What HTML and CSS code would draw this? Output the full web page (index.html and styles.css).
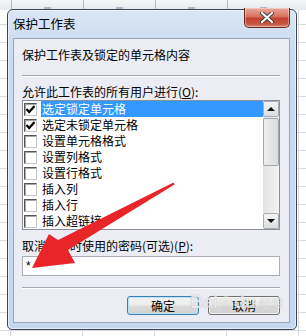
FILE: index.html
```html
<!DOCTYPE html>
<html lang="zh-CN">
<head>
<meta charset="utf-8">
<title>保护工作表</title>
<link rel="stylesheet" href="styles.css">
</head>
<body>
<div class="colhead">
  <div class="corner"></div>
  <div class="col"><span class="letter"></span></div>
  <div class="col"><span class="letter"></span></div>
  <div class="col"><span class="letter"></span></div>
  <div class="col"><span class="letter"></span></div>
</div>

<div class="window">
  <div class="titlebar">
    <span class="title">保护工作表</span>
    <div class="close">
      <svg width="14" height="11" viewBox="0 0 14 11"><path d="M2 1 L12 10 M12 1 L2 10" stroke="#3a3a3a" stroke-width="4" stroke-linecap="round"/><path d="M2 1 L12 10 M12 1 L2 10" stroke="#fff" stroke-width="2.2" stroke-linecap="round"/></svg>
    </div>
  </div>
  <div class="client">
    <div class="intro">保护工作表及锁定的单元格内容</div>
    <div class="sep"></div>
    <div class="label">允许此工作表的所有用户进行(<u>O</u>):</div>
    <div class="list">
      <div class="items">
        <div class="item sel"><span class="cb"><svg width="11" height="11" viewBox="0 0 11 11"><path d="M1.5 5 L4.2 8 L9.5 2" fill="none" stroke="#000" stroke-width="2.2"/></svg></span><span class="txt">选定锁定单元格</span></div>
        <div class="item"><span class="cb"><svg width="11" height="11" viewBox="0 0 11 11"><path d="M1.5 5 L4.2 8 L9.5 2" fill="none" stroke="#000" stroke-width="2.2"/></svg></span><span class="txt">选定未锁定单元格</span></div>
        <div class="item"><span class="cb"></span><span class="txt">设置单元格格式</span></div>
        <div class="item"><span class="cb"></span><span class="txt">设置列格式</span></div>
        <div class="item"><span class="cb"></span><span class="txt">设置行格式</span></div>
        <div class="item"><span class="cb"></span><span class="txt">插入列</span></div>
        <div class="item"><span class="cb"></span><span class="txt">插入行</span></div>
        <div class="item"><span class="cb"></span><span class="txt">插入超链接</span></div>
      </div>
      <div class="scroll">
        <div class="sbtn"><span class="tri up"></span></div>
        <div class="track"><div class="thumb"></div></div>
        <div class="sbtn"><span class="tri down"></span></div>
      </div>
    </div>
    <div class="label l2">取消保护时使用的密码(可选)(<u>P</u>):</div>
    <div class="input">*</div>
    <div class="sep sep2"></div>
    <div class="buttons">
      <div class="btn default">确定</div>
      <div class="btn">取消</div>
    </div>
  </div>
</div>

<svg class="arrow" width="306" height="336" viewBox="0 0 306 336">
  <polygon points="173.5,182.5 58,240 49,234 32,268 75,263 68,250 174.5,184.5" fill="#e8262a"/>
</svg>

<div class="watermark">
  <span class="wm-bai">Bai</span><span class="wm-paw">❀</span><span class="wm-du">du</span><span class="wm-jy">经验</span>
</div>
</body>
</html>
```

FILE: styles.css
```css
* { box-sizing: border-box; margin: 0; padding: 0; }

html, body { width: 306px; height: 336px; overflow: hidden; }

body {
  position: relative;
  font-family: "Noto Sans CJK SC", "Microsoft YaHei", sans-serif;
  font-size: 12px;
  color: #000;
  background-color: #fff;
  background-image:
    linear-gradient(to right, #d8dadd 1px, transparent 1px),
    linear-gradient(to bottom, #d8dadd 1px, transparent 1px);
  background-size: 72px 100%, 100% 18px;
  background-position: 10px 0, 0 24px;
}

/* spreadsheet column header behind the dialog */
.colhead {
  display: flex;
  height: 10px;
  overflow: hidden;
  background: linear-gradient(#f5f6f8, #e4e7ec);
}
.corner { width: 11px; }
.col {
  width: 72px;
  height: 10px;
  border-left: 1px solid #b4bac4;
  display: flex;
  justify-content: center;
  align-items: flex-end;
}
.letter {
  width: 7px;
  height: 3px;
  background: #8a94a3;
  opacity: 0.6;
}

/* dialog window */
.window {
  position: absolute;
  left: 7px;
  top: 9px;
  width: 290px;
  height: 321px;
  border: 1px solid #3b4556;
  border-radius: 6px 6px 5px 5px;
  background: linear-gradient(to bottom, #dbe6f4 0, #c9dbf0 40px, #c3d7ef 100%);
  box-shadow: inset 0 0 0 1px rgba(255,255,255,0.55);
  display: flex;
  flex-direction: column;
  padding: 0 6px 6px 5px;
}

.titlebar {
  height: 28px;
  display: flex;
  align-items: flex-start;
}
.title {
  padding-top: 6px;
  line-height: 16px;
  font-size: 12.5px;
  color: #000;
}
.close {
  margin-left: auto;
  margin-top: -2px;
  width: 46px;
  height: 20px;
  border: 1px solid #6b2a22;
  border-top: none;
  border-radius: 0 0 5px 5px;
  background: linear-gradient(to bottom, #eaa99c 0%, #d7715f 45%, #c2412c 55%, #c85a45 85%, #d98a76 100%);
  display: flex;
  align-items: center;
  justify-content: center;
  box-shadow: inset 0 0 0 1px rgba(255,255,255,0.35);
}

.client {
  flex: 1;
  background: #ebecf4;
  border: 1px solid #96a5b9;
  padding: 8px 8px 0 8px;
}

.intro {
  line-height: 15px;
  height: 15px;
}

.sep {
  margin-top: 13px;
  height: 2px;
  border-top: 1px solid #a3a6b0;
  border-bottom: 1px solid #fff;
  margin-right: 1px;
}

.label {
  margin-top: 8px;
  line-height: 14px;
  height: 14px;
}
.label u { text-decoration: underline; text-underline-offset: 1px; }

.list {
  margin-top: 1px;
  margin-right: 1px;
  height: 130px;
  background: #fff;
  border: 1px solid #8a8f99;
  display: flex;
}
.items { flex: 1; }
.item {
  height: 16px;
  display: flex;
  align-items: center;
}
.cb {
  width: 13px;
  height: 13px;
  margin-left: 1px;
  margin-right: 4px;
  background: #fff;
  border-style: solid;
  border-width: 1px;
  border-color: #555 #c6c6c6 #c6c6c6 #555;
  box-shadow: inset 1px 1px 0 #a8a8a8;
  display: flex;
  align-items: center;
  justify-content: center;
}
.txt {
  flex: 1;
  height: 16px;
  line-height: 16px;
  padding-left: 1px;
}
.sel .txt { background: #3399ff; color: #fff; }

.scroll {
  width: 16px;
  display: flex;
  flex-direction: column;
  background: #eeeeee;
}
.sbtn {
  height: 16px;
  border: 1px solid #a9acb2;
  border-radius: 2px;
  background: linear-gradient(to bottom, #f4f4f4, #dcdde0);
  display: flex;
  align-items: center;
  justify-content: center;
}
.tri { width: 0; height: 0; border-left: 4px solid transparent; border-right: 4px solid transparent; }
.tri.up { border-bottom: 4px solid #111; }
.tri.down { border-top: 4px solid #111; }
.track { flex: 1; padding: 1px 0; background: linear-gradient(to right, #e3e3e3, #f3f3f3); }
.thumb {
  height: 48px;
  border: 1px solid #a3a6ad;
  border-radius: 2px;
  background: linear-gradient(to right, #eceef0, #d9dbde);
}

.l2 { margin-top: 9px; }

.input {
  margin-top: 3px;
  margin-right: 1px;
  height: 20px;
  background: #fff;
  border: 1px solid #a9adb8;
  font-family: "Liberation Sans", sans-serif;
  font-size: 12px;
  line-height: 18px;
  padding-left: 3px;
}

.sep2 { margin-top: 11px; }

.buttons {
  margin-top: 7px;
  display: flex;
  justify-content: flex-end;
  gap: 9px;
  margin-right: 1px;
}
.btn {
  width: 72px;
  height: 19px;
  border: 1px solid #707070;
  border-radius: 3px;
  background: linear-gradient(to bottom, #f3f3f3 0%, #ebebeb 48%, #dddddd 52%, #cfcfcf 100%);
  box-shadow: inset 0 0 0 1px rgba(255,255,255,0.7);
  text-align: center;
  line-height: 17px;
}
.btn.default {
  border-color: #3c7fb1;
  box-shadow: inset 0 0 0 1px #b7e2f7;
}

.arrow {
  position: absolute;
  left: 0;
  top: 0;
  pointer-events: none;
}

.watermark {
  position: absolute;
  left: 190px;
  top: 292px;
  display: flex;
  align-items: baseline;
  color: rgba(255,255,255,0.75);
  text-shadow: 0 0 1px rgba(90,90,90,0.5);
  pointer-events: none;
}
.wm-bai, .wm-du { font-family: "Liberation Sans", sans-serif; font-weight: bold; font-size: 18px; }
.wm-paw { font-size: 14px; margin: 0 1px; }
.wm-jy { font-size: 12px; margin-left: 3px; }
```
